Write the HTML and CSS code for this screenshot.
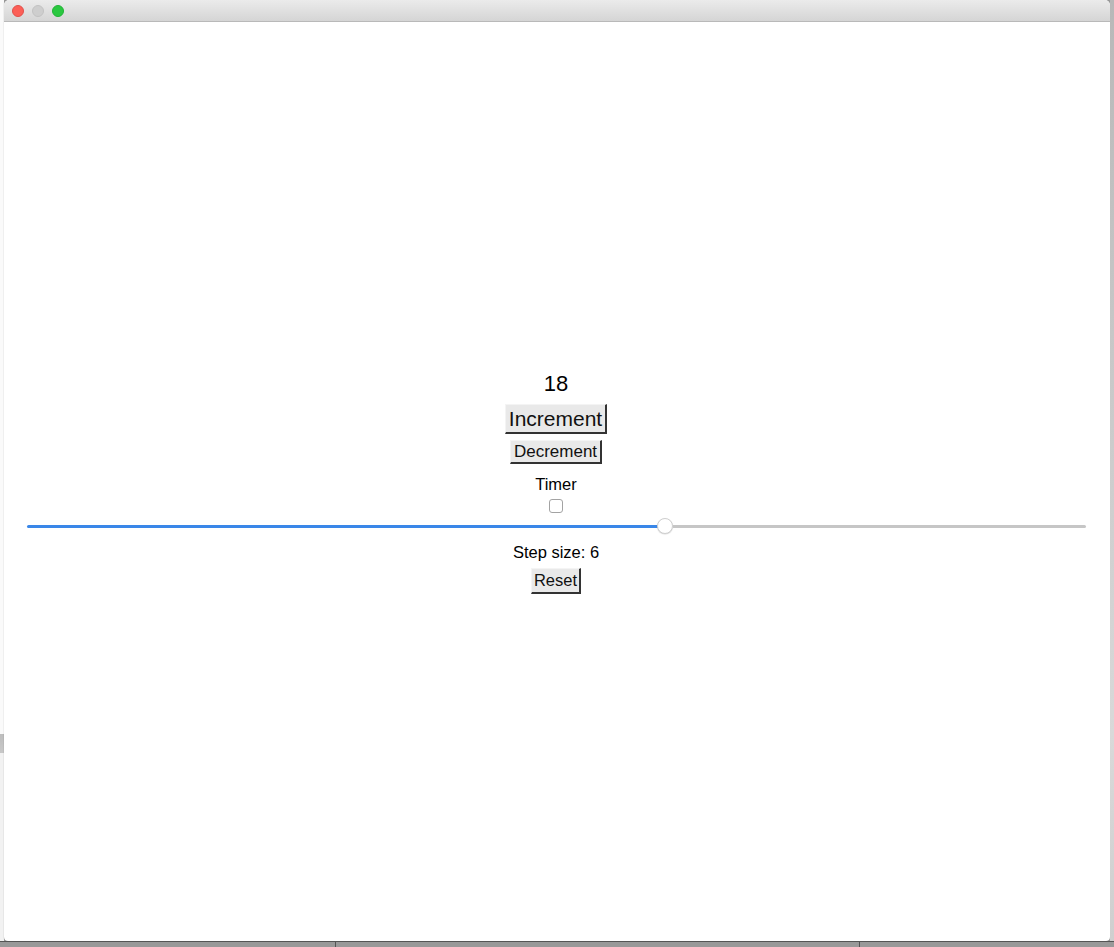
FILE: index.html
```html
<!DOCTYPE html>
<html lang="en">
  <head>
    <meta charset="UTF-8" />
    <meta name="viewport" content="width=device-width, initial-scale=1.0" />
    <link rel="stylesheet" href="styles.css">
    <title>Counter</title>
  </head>
  <body>
    <div class="desktop">
      <div class="behind-left"></div>
      <div class="window">
        <div class="titlebar">
          <span class="light close"></span>
          <span class="light min"></span>
          <span class="light zoom"></span>
        </div>
        <div class="content">
          <div class="app">
            <div class="count">18</div>
            <button class="btn btn-inc">Increment</button>
            <button class="btn btn-dec">Decrement</button>
            <div class="label">Timer</div>
            <input type="checkbox" class="check" />
            <div class="slider">
              <div class="fill" style="width: 59.9%"></div>
              <div class="thumb"></div>
              <div class="rest"></div>
            </div>
            <div class="label step">Step size: 6</div>
            <button class="btn btn-reset">Reset</button>
          </div>
        </div>
      </div>
      <div class="behind-right"></div>
    </div>
    <div class="dock-strip">
      <div class="strip-part a"></div>
      <div class="strip-part b"></div>
      <div class="strip-part c"></div>
    </div>
  </body>
</html>
```

FILE: styles.css
```css
html,
body {
  margin: 0;
  padding: 0;
  height: 100%;
}
body {
  font-family: "Liberation Sans", Arial, Helvetica, sans-serif;
  color: #000000;
  background: #9a9a9a;
  display: flex;
  flex-direction: column;
  overflow: hidden;
}
.desktop {
  display: flex;
  height: 941px;
}
.behind-left {
  width: 4px;
  background: linear-gradient(180deg, #fafafa 0%, #fafafa 78%, #bdbdbd 78%, #c8c8c8 80%, #f2f2f2 80%, #f2f2f2 100%);
}
.behind-right {
  width: 4px;
  background: linear-gradient(180deg, #b8b8b8 0%, #d9d9d9 78%, #cfcfcf 100%);
}
.window {
  flex: 1;
  display: flex;
  flex-direction: column;
  background: #ffffff;
  border-radius: 5px 5px 4px 4px;
  box-shadow: 0 0 1px rgba(0, 0, 0, 0.45);
  overflow: hidden;
}
.titlebar {
  height: 21px;
  flex: 0 0 21px;
  display: flex;
  align-items: center;
  gap: 8px;
  padding-left: 8px;
  background: linear-gradient(180deg, #ebebeb 0%, #d5d5d5 100%);
  border-bottom: 1px solid #b9b9b9;
}
.light {
  width: 12px;
  height: 12px;
  box-sizing: border-box;
  border-radius: 50%;
  display: block;
}
.close {
  background: #fc5f57;
  border: 1px solid #e0504a;
}
.min {
  background: #cecece;
  border: 1px solid #c2c2c2;
}
.zoom {
  background: #2ac840;
  border: 1px solid #22b236;
}
.content {
  flex: 1;
  display: flex;
  align-items: center;
  justify-content: center;
  padding-top: 2px;
}
.app {
  width: 100%;
  box-sizing: border-box;
  padding-right: 2px;
  display: flex;
  flex-direction: column;
  align-items: center;
}
.count {
  font-size: 22px;
  line-height: 26px;
  height: 26px;
}
.btn {
  font-family: "Liberation Sans", Arial, Helvetica, sans-serif;
  color: #111111;
  background: #e9e9e9;
  border-style: solid;
  border-width: 1px 2px 2px 1px;
  border-color: #f4f4f4 #333333 #333333 #f4f4f4;
  border-radius: 0;
  padding: 0 3px;
  margin: 0;
}
.btn-inc {
  margin-top: 7px;
  height: 30px;
  font-size: 21px;
}
.btn-dec {
  margin-top: 6px;
  height: 24px;
  font-size: 17px;
}
.btn-reset {
  margin-top: 6px;
  height: 26px;
  font-size: 16.5px;
  padding: 0 2px;
}
.label {
  font-size: 16.5px;
  line-height: 20px;
  height: 20px;
  margin-top: 10px;
}
.step {
  margin-top: 8px;
}
.check {
  -webkit-appearance: none;
  appearance: none;
  width: 14px;
  height: 14px;
  margin: 5px 0 0 0;
  border: 1px solid #a3a3a3;
  border-radius: 3px;
  background: #ffffff;
  box-sizing: border-box;
}
.slider {
  align-self: stretch;
  margin: 5px 22px 0 23px;
  height: 16px;
  display: flex;
  align-items: center;
}
.fill {
  height: 3px;
  background: #3a87e8;
  border-radius: 2px 0 0 2px;
}
.thumb {
  flex: 0 0 16px;
  height: 16px;
  box-sizing: border-box;
  border-radius: 50%;
  background: #ffffff;
  border: 1px solid #cfcfcf;
  box-shadow: 0 0.5px 1px rgba(0, 0, 0, 0.15);
  margin-left: -4px;
}
.rest {
  flex: 1;
  height: 3px;
  background: #c6c6c6;
  border-radius: 0 2px 2px 0;
}
.dock-strip {
  flex: 1;
  display: flex;
  border-top: 1px solid #555555;
  background: #999999;
}
.strip-part {
  border-right: 1px solid #555555;
}
.strip-part.a {
  width: 335px;
}
.strip-part.b {
  width: 523px;
}
.strip-part.c {
  flex: 1;
  border-right: 0;
}
```
